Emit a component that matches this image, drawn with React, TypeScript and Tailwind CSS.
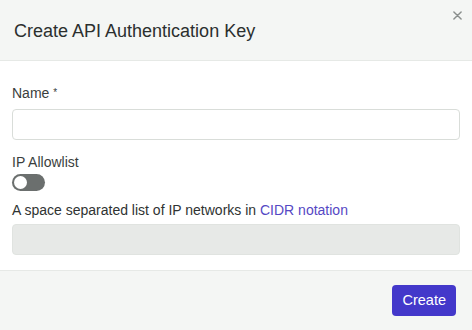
import { useState } from "react";

export default function App() {
  const [name, setName] = useState("");
  const [allow, setAllow] = useState(false);

  return (
    <div
      className="flex h-[330px] w-[472px] flex-col bg-white text-[#2f3332]"
      style={{ fontFamily: '"Liberation Sans", Arial, sans-serif' }}
    >
      {/* Header */}
      <div className="relative flex h-[61px] shrink-0 items-center border-b border-[#e6e9e6] bg-[#f4f6f4] px-[14px]">
        <h2 className="pt-[2px] text-[18px] font-normal text-[#2b2f2e]">
          Create API Authentication Key
        </h2>
        <button
          type="button"
          className="absolute right-[8px] top-[8px] flex h-[14px] w-[14px] items-center justify-center text-[#8a8f8d]"
        >
          <svg viewBox="0 0 10 10" className="h-[9px] w-[9px]" stroke="currentColor" strokeWidth={1.6} strokeLinecap="round">
            <path d="M1 1l8 8M9 1L1 9" />
          </svg>
        </button>
      </div>

      {/* Body */}
      <div className="flex flex-1 flex-col px-[12px] pt-[24px]">
        <label className="text-[14px] leading-[16px] text-[#3a3e3d]">
          Name <span className="relative -top-[2px] text-[10px]">*</span>
        </label>
        <input
          value={name}
          onChange={(e) => setName(e.target.value)}
          className="mt-[6px] h-[31px] w-full rounded-[4px] border border-[#d9ddd9] bg-white px-2 text-[14px] outline-none"
        />

        <label className="mt-[14px] text-[14px] leading-[16px] text-[#3a3e3d]">
          IP Allowlist
        </label>
        <button
          type="button"
          onClick={() => setAllow((a) => !a)}
          className={`mt-[4px] flex h-[17px] w-[33px] items-center rounded-full p-[2px] ${
            allow ? "justify-end bg-[#4338ca]" : "justify-start bg-[#6b6f6e]"
          }`}
        >
          <span className="h-[13px] w-[13px] rounded-full bg-white" />
        </button>

        <p className="mt-[11px] text-[14px] leading-[16px] text-[#2f3332]">
          A space separated list of IP networks in{" "}
          <a className="text-[#5548c4]">CIDR notation</a>
        </p>
        <input
          disabled={!allow}
          className="mt-[6px] h-[31px] w-full rounded-[4px] border border-[#e0e3e0] bg-[#e7e9e7] px-2 text-[14px] outline-none"
        />
      </div>

      {/* Footer */}
      <div className="flex h-[60px] shrink-0 items-center justify-end border-t border-[#e6e9e6] bg-[#f4f6f4] px-[16px]">
        <button
          type="button"
          className="h-[31px] rounded-[4px] bg-[#4338ca] px-[10px] text-[14.5px] text-white"
        >
          Create
        </button>
      </div>
    </div>
  );
}
